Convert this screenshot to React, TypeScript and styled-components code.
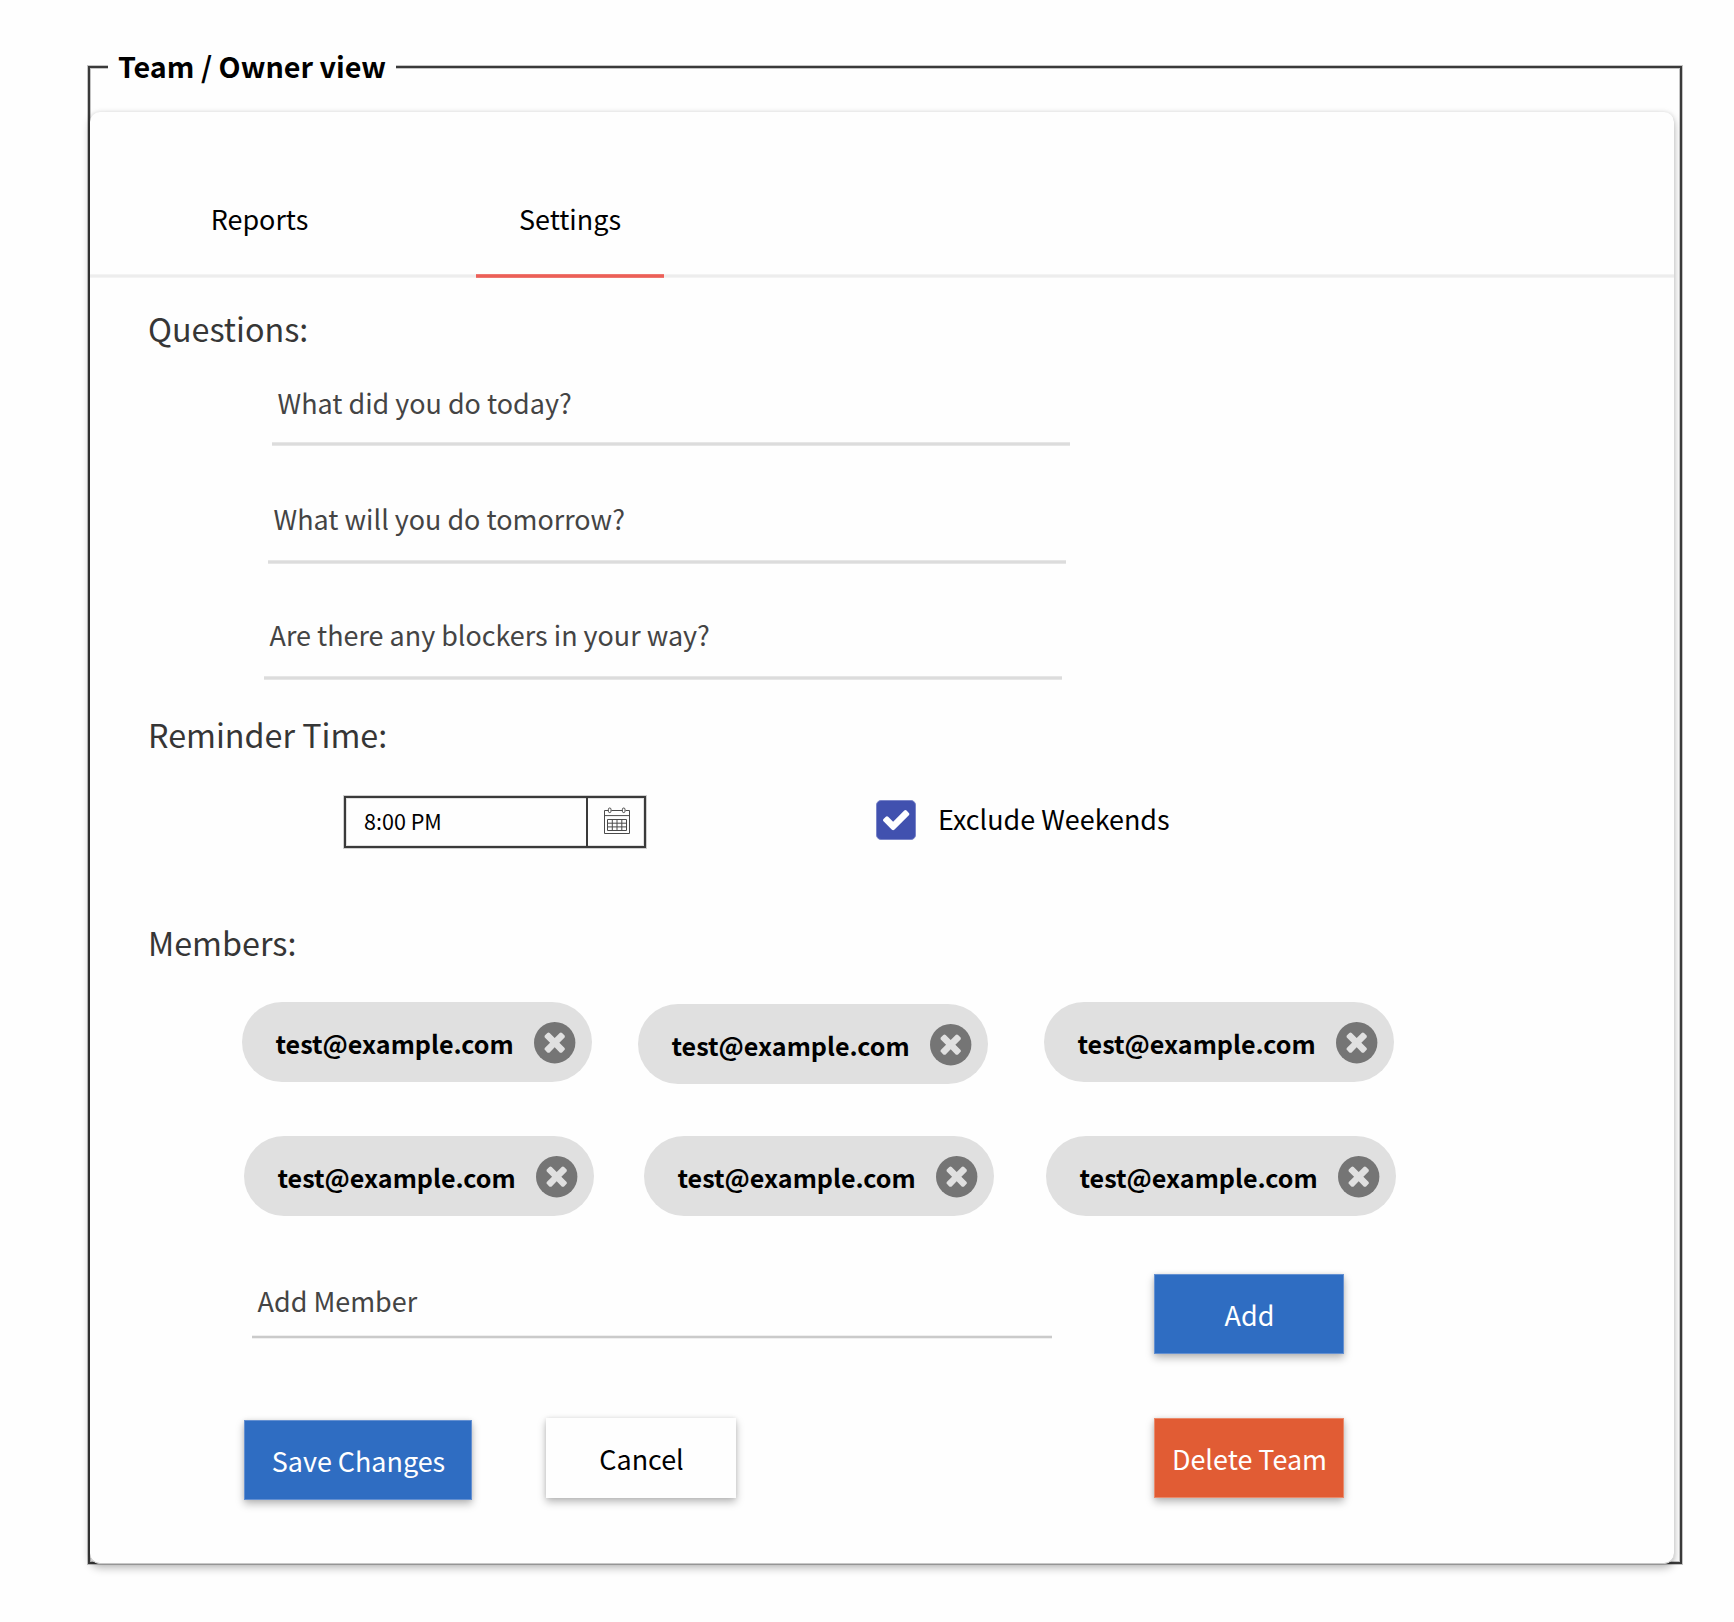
import React from "react";
import styled, { createGlobalStyle, css } from "styled-components";

const INK = "#3a3a3a";
const PAPER = "#fefefe";
const LIFT = "0 4px 8px rgba(0, 0, 0, 0.27), 0 0 4px rgba(0, 0, 0, 0.09)";

const GlobalStyle = createGlobalStyle`
  *, *::before, *::after { box-sizing: border-box; }
  body {
    margin: 0;
    background: ${PAPER};
    color: #000;
    font-family: "Noto Sans CJK SC", "Noto Sans", sans-serif;
    font-size: 26.93px;
    line-height: 39px;
  }
  button, input { font: inherit; }
`;

/* Horizontal rule whose first and last pixel rows are lighter than its core. */
const rule = (core: string, edge: string) => css`
  background-image: linear-gradient(
    to bottom,
    ${edge} 1px,
    ${core} 1px,
    ${core} 3px,
    ${edge} 3px
  );
  background-position: left bottom;
  background-size: 100% 4px;
  background-repeat: no-repeat;
`;

const Page = styled.div`
  padding: 47px 52px 58px 88px;
`;

const Frame = styled.fieldset`
  min-width: 0;
  height: 1517px;
  margin: 0;
  padding: 0;
  border: 2px solid ${INK};
  box-shadow: 0 0 0 1px #c4c4c4, inset 0 0 0 1px #c4c4c4;
`;

const Legend = styled.legend`
  width: 288px;
  height: 40px;
  margin-left: 18px;
  padding: 0 0 0 10px;
  background: ${PAPER};
  font-size: 28.7px;
  font-weight: 700;
  line-height: 37px;
  white-space: nowrap;
`;

const Card = styled.section`
  width: 1584px;
  height: 1452px;
  margin: 25px 0 -2px;
  border-radius: 10px;
  background: ${PAPER};
  box-shadow: ${LIFT}, inset 0 -1px #c8c8c8;
`;

const Tabs = styled.nav`
  display: flex;
  gap: 123px;
  height: 166px;
  padding-left: 75px;
  ${rule("#ededed", "#f3f3f3")}
`;

const Tab = styled.a<{ $active?: boolean }>`
  width: 188px;
  padding: 87px 0 0 1px;
  text-align: center;
  ${(p) => p.$active && rule("#ec5f57", "#ee7770")}
  ${(p) => p.$active && "padding-left: 0;"}
`;

const Heading = styled.h2<{ $top: number }>`
  margin: ${(p) => p.$top}px 0 0 58px;
  color: #363636;
  font-size: 32.3px;
  font-weight: 400;
  line-height: 46px;
`;

const Questions = styled.div`
  display: flex;
  flex-direction: column;
  padding-top: 32px;
`;

const Field = styled.div<{ $left: number; $top?: number; $drop: number }>`
  width: 798px;
  margin: ${(p) => p.$top ?? 0}px 0 0 ${(p) => p.$left}px;
  padding: 0 6px ${(p) => p.$drop + 4}px 5.6px;
  color: #444;
  ${rule("#dcdcdc", "#e6e6e6")}
`;

const MemberField = styled(Field)`
  width: 800px;
  ${rule("#cacaca", "#efefef")}
`;

const ReminderRow = styled.div`
  display: flex;
  align-items: flex-start;
  gap: 230px;
  padding: 39px 0 0 254px;
`;

const TimePicker = styled.div`
  display: flex;
  width: 302px;
  height: 52px;
  border: 2px solid ${INK};
  box-shadow: 0 0 0 1px #cfcfcf, inset 0 0 0 1px #e0e0e0;
`;

const TimeValue = styled.span`
  flex: 1;
  padding: 7px 0 0 18px;
  font-size: 21.54px;
  line-height: 31px;
`;

const TimeButton = styled.span`
  display: flex;
  width: 58px;
  padding: 9px 0 0 15px;
  border-left: 2px solid ${INK};
`;

const CheckOption = styled.label`
  display: flex;
  align-items: flex-start;
  gap: 22px;
  padding-top: 3px;
`;

const CheckBox = styled.span`
  display: grid;
  place-items: center;
  width: 40px;
  height: 40px;
  margin-top: 1px;
  border: 1px solid #7a85c9;
  border-radius: 5px;
  background: #4151af;
`;

const ChipRow = styled.div<{ $top: number }>`
  display: flex;
  align-items: flex-start;
  height: 80px;
  margin-top: ${(p) => p.$top}px;
`;

const ChipBox = styled.div<{ $left: number; $drop?: number }>`
  display: flex;
  flex: none;
  gap: 20px;
  width: 350px;
  height: 80px;
  margin: ${(p) => p.$drop ?? 0}px 0 0 ${(p) => p.$left}px;
  padding: 20px 0 0 33.5px;
  border-radius: 40px;
  background: #e0e0e0;
`;

const ChipText = styled.span`
  padding-top: 3px;
  font-size: 25.1px;
  font-weight: 700;
  line-height: 36px;
`;

const AddRow = styled.div`
  display: flex;
  align-items: flex-start;
  gap: 102px;
  margin-top: 58px;
`;

const Actions = styled.div`
  display: flex;
  align-items: flex-start;
  margin-top: 64px;
  padding-left: 154px;
`;

const tones = {
  blue: css`
    border-color: #6490d1;
    background: #2f6dc2;
    color: #fff;
  `,
  orange: css`
    border-color: #ea8a6b;
    background: #e15c34;
    color: #fff;
  `,
  plain: css`
    border-color: ${PAPER};
    background: ${PAPER};
    color: #000;
  `,
};

const Button = styled.button<{
  $tone: keyof typeof tones;
  $width?: number;
  $left?: number;
  $drop?: number;
}>`
  width: ${(p) => p.$width ?? 190}px;
  height: 80px;
  margin: ${(p) => p.$drop ?? 0}px 0 0 ${(p) => p.$left ?? 0}px;
  padding: 1px 0 0 1px;
  border: 1px solid;
  box-shadow: ${LIFT};
  white-space: nowrap;
  ${(p) => tones[p.$tone]}
`;

const CalendarIcon = () => (
  <svg width="28" height="28" viewBox="0 0 28 28" fill="none" stroke="#4a4a4a" strokeWidth="1">
    <path d="M5 3.5H1.5V26.5H26.5V3.5H22.6M8.4 3.5H19.2M1.5 8.6H26.5" />
    <rect x="5.4" y="1" width="2.6" height="4.6" rx="1.3" />
    <rect x="19.4" y="1" width="2.6" height="4.6" rx="1.3" />
    <path d="M4.5 12.5H23.5V23.5H4.5ZM4.5 16.2H23.5M4.5 19.9H23.5M9.3 12.5V23.5M14 12.5V23.5M18.8 12.5V23.5" />
  </svg>
);

const CheckIcon = () => (
  <svg width="30.4" height="30.4" viewBox="0 32 1792 1792" fill="#fff">
    <path d="M1671 566q0 40-28 68l-724 724-136 136q-28 28-68 28t-68-28l-136-136-362-362q-28-28-28-68t28-68l136-136q28-28 68-28t68 28l294 295 656-657q28-28 68-28t68 28l136 136q28 28 28 68z" />
  </svg>
);

const RemoveIcon = () => (
  <svg width="42" height="42" viewBox="0 0 42 42">
    <circle cx="20.7" cy="20.7" r="20.7" fill="#757575" />
    <path
      transform="translate(20.7 20.7) scale(0.0171) translate(-896 -960)"
      fill="#e0e0e0"
      d="M1490 1322q0 40-28 68l-136 136q-28 28-68 28t-68-28l-294-294-294 294q-28 28-68 28t-68-28l-136-136q-28-28-28-68t28-68l294-294-294-294q-28-28-28-68t28-68l136-136q28-28 68-28t68 28l294 294 294-294q28-28 68-28t68 28l136 136q28 28 28 68t-28 68l-294 294 294 294q28 28 28 68z"
    />
  </svg>
);

const Chip = ({ left, drop }: { left: number; drop?: number }) => (
  <ChipBox $left={left} $drop={drop}>
    <ChipText>test@example.com</ChipText>
    <RemoveIcon />
  </ChipBox>
);

export default function App() {
  return (
    <>
      <GlobalStyle />
      <Page>
        <Frame>
          <Legend>Team / Owner view</Legend>
          <Card>
            <Tabs>
              <Tab>Reports</Tab>
              <Tab $active>Settings</Tab>
            </Tabs>

            <Heading $top={27}>Questions:</Heading>
            <Questions>
              <Field $left={182} $drop={20}>What did you do today?</Field>
              <Field $left={178} $top={53} $drop={22}>What will you do tomorrow?</Field>
              <Field $left={174} $top={51} $drop={22}>Are there any blockers in your way?</Field>
            </Questions>

            <Heading $top={31}>Reminder Time:</Heading>
            <ReminderRow>
              <TimePicker>
                <TimeValue>8:00 PM</TimeValue>
                <TimeButton>
                  <CalendarIcon />
                </TimeButton>
              </TimePicker>
              <CheckOption>
                <CheckBox>
                  <CheckIcon />
                </CheckBox>
                Exclude Weekends
              </CheckOption>
            </ReminderRow>

            <Heading $top={71}>Members:</Heading>
            <ChipRow $top={37}>
              <Chip left={152} />
              <Chip left={46} drop={2} />
              <Chip left={56} />
            </ChipRow>
            <ChipRow $top={54}>
              <Chip left={154} />
              <Chip left={50} />
              <Chip left={52} />
            </ChipRow>

            <AddRow>
              <MemberField $left={162} $top={7} $drop={15}>Add Member</MemberField>
              <Button $tone="blue">Add</Button>
            </AddRow>
            <Actions>
              <Button $tone="blue" $width={228} $drop={2}>Save Changes</Button>
              <Button $tone="plain" $left={74}>Cancel</Button>
              <Button $tone="orange" $left={418}>Delete Team</Button>
            </Actions>
          </Card>
        </Frame>
      </Page>
    </>
  );
}
